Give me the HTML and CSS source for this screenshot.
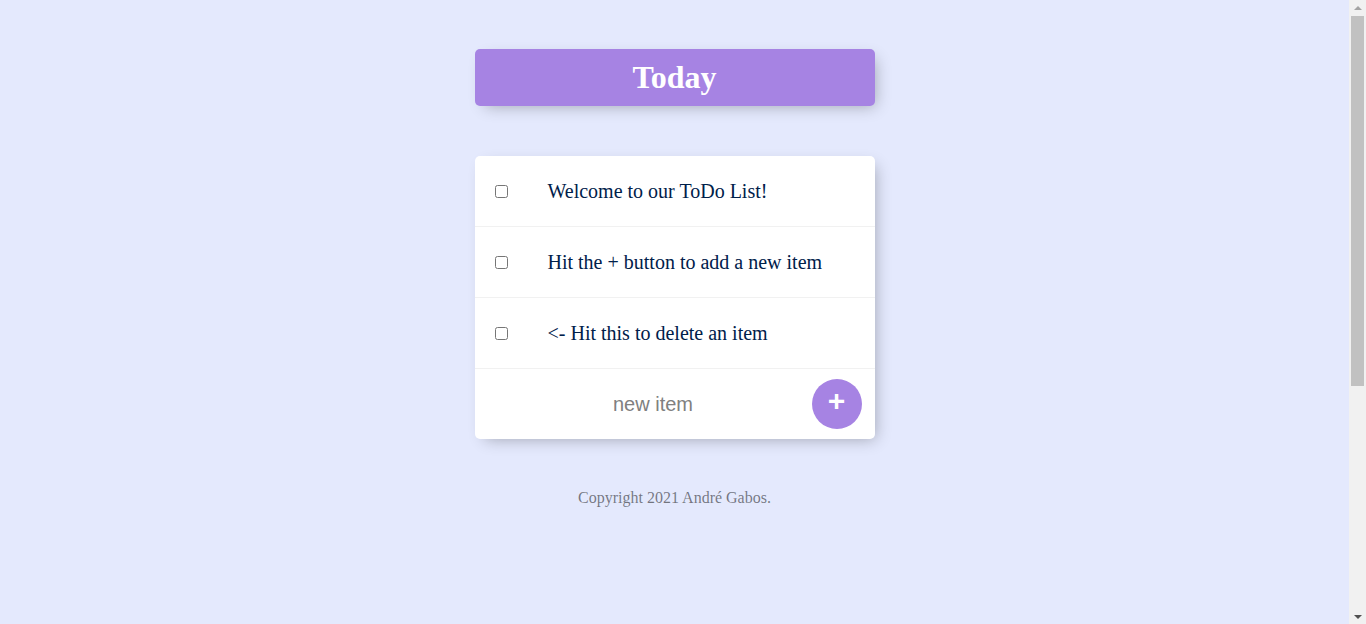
FILE: index.html
```html
<!DOCTYPE html>
<html>
<head>
<meta charset="utf-8">
<title>To Do List</title>
<link rel="stylesheet" href="styles.css">
</head>
<body class="page">
  <div class="box heading">
    <h1 class="title">Today</h1>
  </div>
  <div class="box">
    <div class="item">
      <input class="check" type="checkbox">
      <p class="text">Welcome to our ToDo List!</p>
    </div>
    <div class="item">
      <input class="check" type="checkbox">
      <p class="text">Hit the + button to add a new item</p>
    </div>
    <div class="item">
      <input class="check" type="checkbox">
      <p class="text">&lt;- Hit this to delete an item</p>
    </div>
    <form class="item new-form" onsubmit="return false">
      <input class="new-input" type="text" name="newItem" placeholder="new item" autocomplete="off">
      <button class="add-btn" type="submit">+</button>
    </form>
  </div>
  <footer class="footer">Copyright 2021 André Gabos.</footer>
  <div class="scrollbar" aria-hidden="true">
    <span class="sb-btn"><span class="sb-up"></span></span>
    <span class="sb-track"><span class="sb-thumb"></span></span>
    <span class="sb-btn"><span class="sb-down"></span></span>
  </div>
</body>
</html>
```

FILE: styles.css
```css
html {
  background-color: #E4E9FD;
  min-height: 1000px;
}
.page {
  margin: 0 25px 0 8px;
  font-family: "Liberation Serif", "Times New Roman", serif;
}
.box {
  max-width: 400px;
  margin: 50px auto;
  background: #fff;
  border-radius: 5px;
  box-shadow: 5px 5px 15px -5px rgba(0, 0, 0, 0.3);
}
.heading {
  background-color: #A683E3;
  text-align: center;
  margin-top: 49px;
}
.title {
  color: #fff;
  padding: 10px;
  margin: 21.44px 0;
  font-size: 32px;
  font-weight: bold;
}
.item {
  min-height: 70px;
  display: flex;
  align-items: center;
  border-bottom: 1px solid #F1F1F1;
}
.item:last-child {
  border-bottom: 0;
}
.check {
  margin: 20px;
}
.text {
  margin: 0;
  padding: 20px;
  font-size: 20px;
  font-weight: 200;
  color: #00204a;
}
.new-form {
  text-align: center;
  margin-left: 20px;
}
.new-input {
  text-align: center;
  height: 60px;
  border: none;
  background: transparent;
  font-family: "Liberation Sans", Arial, sans-serif;
  font-size: 20px;
  font-weight: 200;
  width: 313px;
  padding: 1px 2px;
  margin: 0;
  box-sizing: content-box;
}
.new-input:focus {
  outline: none;
  box-shadow: inset 0 -3px 0 0 #A683E3;
}
.new-input::placeholder {
  color: grey;
  opacity: 1;
}
.add-btn {
  min-height: 50px;
  width: 50px;
  border-radius: 50%;
  border: 0;
  background-color: #A683E3;
  color: #fff;
  font-family: "Liberation Sans", Arial, sans-serif;
  font-size: 30px;
  font-weight: bold;
  padding: 0 0 6px 0;
  margin: 0;
  line-height: normal;
}
.footer {
  color: rgba(0, 0, 0, 0.5);
  text-align: center;
  font-size: 16px;
}
.scrollbar {
  position: fixed;
  top: 0;
  right: 0;
  width: 17px;
  height: 100vh;
  background: #f1f1f1;
  display: flex;
  flex-direction: column;
}
.sb-btn {
  height: 15px;
  display: flex;
  align-items: center;
  justify-content: center;
  flex: none;
}
.sb-up {
  width: 0;
  height: 0;
  border-left: 4px solid transparent;
  border-right: 4px solid transparent;
  border-bottom: 4px solid #a3a3a3;
}
.sb-down {
  width: 0;
  height: 0;
  border-left: 4px solid transparent;
  border-right: 4px solid transparent;
  border-top: 4px solid #505050;
}
.sb-track {
  flex: 1;
  padding: 1px 2px 0;
}
.sb-thumb {
  display: block;
  height: 370px;
  background: #c1c1c1;
}
```
